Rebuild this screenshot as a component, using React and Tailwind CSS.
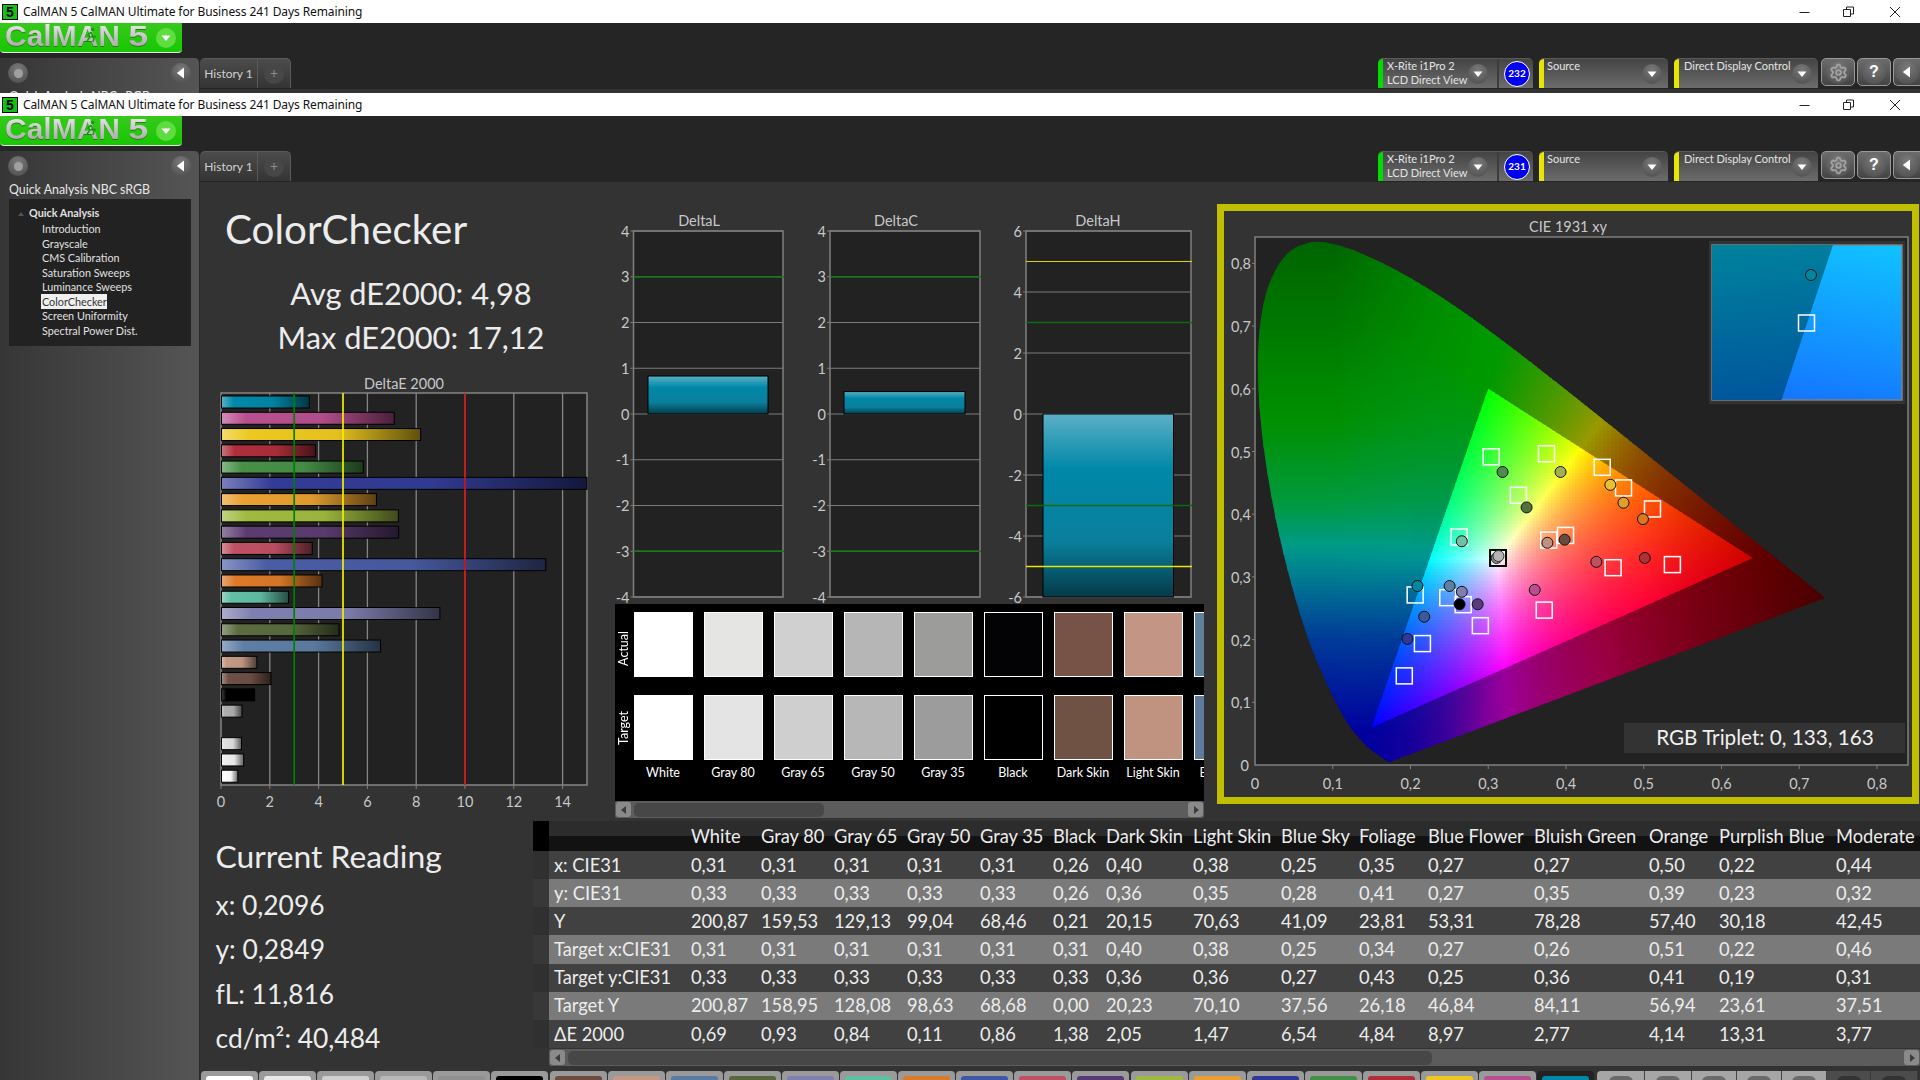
import { Settings } from 'lucide-react'

const swatches = [
  ['White', '#ffffff', '#ffffff'],
  ['Gray 80', '#e5e5e3', '#e4e4e4'],
  ['Gray 65', '#d0d0d0', '#cfcfcf'],
  ['Gray 50', '#b6b6b6', '#b7b7b7'],
  ['Gray 35', '#9c9c9a', '#9c9c9c'],
  ['Black', '#030305', '#000000'],
  ['Dark Skin', '#775347', '#705244'],
  ['Light Skin', '#c29585', '#c09380'],
  ['Blue Sky', '#5f7f9a', '#5f7a9c'],
]

const columns = ['White', 'Gray 80', 'Gray 65', 'Gray 50', 'Gray 35', 'Black', 'Dark Skin', 'Light Skin', 'Blue Sky', 'Foliage', 'Blue Flower', 'Bluish Green', 'Orange', 'Purplish Blue', 'Moderate']

const rows = [
  ['x: CIE31', '0,31 0,31 0,31 0,31 0,31 0,26 0,40 0,38 0,25 0,35 0,27 0,27 0,50 0,22 0,44'],
  ['y: CIE31', '0,33 0,33 0,33 0,33 0,33 0,26 0,36 0,35 0,28 0,41 0,27 0,35 0,39 0,23 0,32'],
  ['Y', '200,87 159,53 129,13 99,04 68,46 0,21 20,15 70,63 41,09 23,81 53,31 78,28 57,40 30,18 42,45'],
  ['Target x:CIE31', '0,31 0,31 0,31 0,31 0,31 0,31 0,40 0,38 0,25 0,34 0,27 0,26 0,51 0,22 0,46'],
  ['Target y:CIE31', '0,33 0,33 0,33 0,33 0,33 0,33 0,36 0,36 0,27 0,43 0,25 0,36 0,41 0,19 0,31'],
  ['Target Y', '200,87 158,95 128,08 98,63 68,68 0,00 20,23 70,10 37,56 26,18 46,84 84,11 56,94 23,61 37,51'],
  ['ΔE 2000', '0,69 0,93 0,84 0,11 0,86 1,38 2,05 1,47 6,54 4,84 8,97 2,77 4,14 13,31 3,77'],
]

// top to bottom as drawn in the DeltaE chart
const deltaBars = [
  [3.62, '#0088a8'], [7.1, '#b85090'], [8.18, '#eec820'], [3.87, '#ae2f3a'], [5.83, '#489048'], [15, '#323c96'],
  [6.37, '#e8a030'], [7.27, '#a0ba40'], [7.28, '#5c3c70'], [3.74, '#c05064'], [13.31, '#4a5ca4'], [4.14, '#dc7a28'],
  [2.77, '#62c0a6'], [8.97, '#8080b0'], [4.84, '#5c6c40'], [6.54, '#5e7ea4'], [1.47, '#c49a86'], [2.05, '#6e5044'],
  [1.38, '#000000'], [0.86, '#b0b0b0'], [0, '#b4b4b4'], [0.84, '#e0e0e0'], [0.93, '#f0f0f0'], [0.69, '#ffffff'],
]

const tabColors = ['#ffffff', '#e8e8e8', '#d0d0d0', '#b8b8b8', '#909090', '#000000', '#6e4c40', '#c49a86', '#5a7ca4', '#55683e', '#7f7fb0', '#60c0a4', '#dc7a28', '#4058a4', '#c05064', '#5a3a74', '#a0ba40', '#e8a030', '#30389a', '#409048', '#ae2f3a', '#eec820', '#b85090', '#0088a8']

const locusRaw = [[.1741,.005],[.1714,.0051],[.1644,.0109],[.1566,.0177],[.144,.0297],[.1241,.0578],[.1096,.0868],[.0913,.1327],[.0687,.2007],[.0454,.295],[.0235,.4127],[.0082,.5384],[.0039,.6548],[.0139,.7502],[.0389,.812],[.0743,.8338],[.1142,.8262],[.1547,.8059],[.1929,.7816],[.2296,.7543],[.2658,.7243],[.3016,.6923],[.3373,.6589],[.3731,.6245],[.4087,.5896],[.4441,.5547],[.4788,.5202],[.5125,.4866],[.5448,.4544],[.5752,.4242],[.6029,.3965],[.627,.3725],[.6658,.334],[.6915,.3083],[.7079,.292],[.719,.2809],[.726,.274],[.7334,.2666]]

// catmull-rom through the table so the horseshoe has no corners
function smooth(list) {
  const out = []
  for (let i = 0; i < list.length - 1; i++) {
    const p0 = list[Math.max(i - 1, 0)]
    const p1 = list[i]
    const p2 = list[i + 1]
    const p3 = list[Math.min(i + 2, list.length - 1)]
    for (let t = 0; t < 1; t += 0.125) {
      const f = k => 0.5 * (2 * p1[k] + (p2[k] - p0[k]) * t + (2 * p0[k] - 5 * p1[k] + 4 * p2[k] - p3[k]) * t * t + (3 * p1[k] - p0[k] - 3 * p2[k] + p3[k]) * t * t * t)
      out.push([f(0), f(1)])
    }
  }
  out.push(list[list.length - 1])
  return out
}
const locus = smooth(locusRaw)

const px = x => 1255 + x * 777.5
const py = y => 765 - y * 627
const toPoints = list => list.map(([x, y]) => `${px(x)},${py(y)}`).join(' ')

const leftStops = [[0, [0, 0, 156]], [.05, [0, 0, 160]], [.12, [0, 26, 156]], [.2, [0, 58, 152]], [.25, [0, 90, 148]], [.3, [0, 124, 144]], [.35, [0, 154, 136]], [.42, [0, 154, 60]], [.55, [0, 144, 0]], [.7, [0, 120, 0]], [.84, [0, 100, 0]]]

function leftColor(y) {
  for (let i = 0; i < leftStops.length - 1; i++) {
    const [a, ca] = leftStops[i]
    const [b, cb] = leftStops[i + 1]
    if (y <= b) return ca.map((v, k) => v + (cb[k] - v) * ((y - a) / (b - a)))
  }
  return leftStops[leftStops.length - 1][1]
}

function xyColor(x, y, inside) {
  const X = x / y
  const Z = (1 - x - y) / y
  const r = Math.max(3.2406 * X - 1.5372 - 0.4986 * Z, 0)
  const g = Math.max(-0.9689 * X + 1.8758 + 0.0415 * Z, 0)
  const b = Math.max(0.0557 * X - 0.204 + 1.057 * Z, 0)
  const m = Math.max(r, g, b) || 1
  if (inside) {
    const dim = x > 0.5 ? 1 - (x - 0.5) * 1.4 : 1
    const c = v => Math.round(255 * dim * Math.pow(v / m, 0.95))
    return `rgb(${c(r)},${c(g)},${c(b)})`
  }
  const dim = 0.6 - Math.max(0, x - 0.45) * 1.1
  const computed = [r, g, b].map(v => 255 * dim * Math.pow(v / m, 0.9))
  const left = leftColor(y)
  const w = Math.min(Math.max((x - 0.1) / 0.2, 0), 1)
  const mixed = left.map((v, k) => Math.round(v + (computed[k] - v) * w))
  return `rgb(${mixed[0]},${mixed[1]},${mixed[2]})`
}

function buildCells(x0, x1, y0, y1, step, inside) {
  const cells = []
  for (let sx = x0; sx < x1; sx += step) {
    for (let sy = y0; sy < y1; sy += step) {
      const x = (sx + step / 2 - 1255) / 777.5
      const y = (765 - sy - step / 2) / 627
      cells.push(<rect key={`${sx}-${sy}`} x={sx} y={sy} width={step + 0.5} height={step + 0.5} fill={xyColor(x, Math.max(y, 0.004), inside)} />)
    }
  }
  return cells
}

const outerCells = buildCells(1255, 1830, 238, 765, 4, false)
const innerCells = buildCells(1368, 1756, 386, 730, 3, true)

const targets = [[621,660],[743,652],[866,687],[913,740],[977,794],[681,759],[550,866],[748,874],[785,862],[890,945],[1021,937],[453,1015],[525,1022],[559,1040],[738,1054],[597,1094],[469,1140],[429,1223]]
const dots = [[646,699,'#4d8a4d'],[774,699,'#a0b050'],[884,732,'#e8c030'],[913,778,'#e0a030'],[956,820,'#d87820'],[699,790,'#50703c'],[556,877,'#70c0a8'],[745,881,'#c09080'],[783,873,'#6b4a40'],[853,930,'#c05060'],[960,920,'#b03038'],[458,992,'#0088a0'],[529,992,'#5c7fa6'],[556,1007,'#8080b0'],[551,1039,'#000000'],[591,1039,'#5a3a78'],[717,1002,'#b85090'],[473,1071,'#3a5a9a'],[436,1128,'#303898']]
const zx = v => 1210 + v / 2.208
const zy = v => 200 + v / 2.57

function mixHex(hex, target, amount) {
  const n = parseInt(hex.slice(1), 16)
  const c = [n >> 16, (n >> 8) & 255, n & 255].map(v => Math.round(v + (target - v) * amount))
  return `rgb(${c[0]},${c[1]},${c[2]})`
}

function Triangle({ dir = 'left', className }) {
  return (
    <svg viewBox="0 0 10 10" className={className}>
      {dir === 'left' ? <path d="M7.5 0.5v9L1.5 5z" fill="currentColor" /> : <path d="M0.5 2.5h9L5 8z" fill="currentColor" />}
    </svg>
  )
}

function RoundButton({ size = 'w-[20px] h-[20px]', children }) {
  return (
    <span className={`${size} rounded-full bg-[radial-gradient(circle_at_50%_30%,#7a7a7a,#4a4a4a)] flex items-center justify-center shrink-0 text-white`}>
      {children}
    </span>
  )
}

function TitleBar() {
  return (
    <div className="h-[23px] bg-white flex items-center text-[#111] shrink-0">
      <span className="ml-[2px] w-[16px] h-[16px] bg-[#12c412] border border-black flex items-center justify-center font-['Liberation_Sans',sans-serif] font-bold text-[14px] leading-none text-black">5</span>
      <span className="ml-[5px] font-['Noto_Sans',sans-serif] text-[12px] tracking-[-0.1px]">CalMAN 5 CalMAN Ultimate for Business 241 Days Remaining</span>
      <div className="ml-auto mr-[6px] flex items-center text-[#222]">
        <svg width="120" height="16" viewBox="0 0 120 16" fill="none" stroke="currentColor">
          <path d="M5.500 8.500h10" />
          <path d="M49.500 5.500h7v7h-7zM52.500 5.500v-2.500h7v7h-3" />
          <path d="M96 3l10 10M106 3l-10 10" />
        </svg>
      </div>
    </div>
  )
}

function Logo() {
  const metal = "font-['Liberation_Sans',sans-serif] font-bold text-[30px] leading-[34px] bg-[linear-gradient(#f4f4f4,#9a9a9a)] bg-clip-text text-transparent -mt-[3px]"
  return (
    <div className="h-[30px] w-[182px] shrink-0 rounded-b-[4px] bg-[linear-gradient(#38c81e,#16c800)] border-b border-[#e8e8e8] flex items-center pl-[5px] overflow-hidden relative">
      <span className={`${metal} [filter:drop-shadow(0_1px_0_#2a7a1a)]`}>CalMAN</span>
      <span className={`${metal} inline-block ml-[10px] scale-x-[1.2] [filter:drop-shadow(0_1px_0_#2a7a1a)]`}>5</span>
      <span className="absolute left-[156px] top-[5px] w-[20px] h-[20px] rounded-full bg-[#5fdc40] flex items-center justify-center text-white">
        <Triangle dir="down" className="w-[10px] h-[10px]" />
      </span>
      <svg className="absolute left-[84px] top-[4px]" width="14" height="16" viewBox="0 0 14 16">
        <circle cx="8.500" cy="2.500" r="1.800" fill="#1a9a10" />
        <path d="M7 5l-3 3 2 2-3 4M7 5l2 4 3 1M7 9l3 2-1 4" fill="none" stroke="#1a9a10" strokeWidth="1.600" />
      </svg>
    </div>
  )
}

function Device({ width, accent, pad, lines, children }) {
  return (
    <div className={`${width} h-[30px] rounded-t-[5px] bg-[linear-gradient(#444444,#6c6c6c)] border-t border-[#5a5a5a] flex overflow-hidden`}>
      <span className={`w-[5px] ${accent} rounded-tl-[4px] shrink-0`} />
      <div className={`${pad} flex-1 min-w-0 font-['Lato',sans-serif] text-[11px] leading-[14px] text-[#e4e4e4] whitespace-nowrap`}>
        {lines.map(l => <div key={l}>{l}</div>)}
      </div>
      {children}
    </div>
  )
}

function SquareButton({ className, children }) {
  return (
    <div className={`h-[28px] rounded-[5px] border border-[#999999] bg-[linear-gradient(#6c6c6c,#444444)] flex items-center justify-center ${className}`}>
      {children}
    </div>
  )
}

function Toolbar({ count }) {
  return (
    <div className="h-[31px] flex shrink-0 bg-[#252525]">
      <div className="w-[58px] h-[30px] rounded-tl-[5px] bg-[linear-gradient(#4c4c4c,#343434)] border-t border-r border-[#5a5a5a] font-['Lato',sans-serif] text-[12px] text-[#d0d0d0] flex items-center justify-center">History 1</div>
      <div className="w-[33px] h-[30px] rounded-tr-[5px] bg-[linear-gradient(#4c4c4c,#343434)] border-t border-r border-[#5a5a5a] flex items-center justify-center">
        <span className="w-[20px] h-[20px] rounded-full bg-[#474747] text-[#8a8a8a] text-[14px] leading-none flex items-center justify-center">+</span>
      </div>
      <div className="ml-auto flex items-start">
        <Device width="w-[155px]" accent="bg-[#00dc00]" pad="pl-[4px]" lines={['X-Rite i1Pro 2', 'LCD Direct View']}>
          <div className="flex items-center pr-[3px]">
            <RoundButton><Triangle dir="down" className="w-[10px] h-[10px]" /></RoundButton>
            <span className="w-[2px] h-full bg-[#3c3c3c] ml-[9px] mr-[5.500px]" />
            <span className="w-[26px] h-[26px] rounded-full bg-[#0000f0] border border-white text-white font-['Lato',sans-serif] text-[10px] font-bold flex items-center justify-center">{count}</span>
          </div>
        </Device>
        <div className="w-[6px]" />
        <Device width="w-[129px]" accent="bg-[#e6e600]" pad="pl-[3px]" lines={['Source']}>
          <div className="flex items-center pr-[6px]"><RoundButton><Triangle dir="down" className="w-[10px] h-[10px]" /></RoundButton></div>
        </Device>
        <div className="w-[6px]" />
        <Device width="w-[144px]" accent="bg-[#e6e600]" pad="pl-[5px]" lines={['Direct Display Control']}>
          <div className="flex items-center pr-[6px]"><RoundButton><Triangle dir="down" className="w-[10px] h-[10px]" /></RoundButton></div>
        </Device>
        <SquareButton className="w-[34px] ml-[3px]">
          <RoundButton size="w-[24px] h-[24px]"><Settings size={19} className="text-[#a0a0a0]" strokeWidth={2.5} /></RoundButton>
        </SquareButton>
        <SquareButton className="w-[34px] ml-[2px]">
          <RoundButton size="w-[24px] h-[24px]"><span className="font-['Liberation_Sans',sans-serif] font-bold text-[16px] leading-none">?</span></RoundButton>
        </SquareButton>
        <SquareButton className="w-[27px] ml-[2px] rounded-r-none border-r-0">
          <RoundButton size="w-[24px] h-[24px]"><Triangle className="w-[12px] h-[12px]" /></RoundButton>
        </SquareButton>
      </div>
    </div>
  )
}

function Sidebar() {
  const items = ['Introduction', 'Grayscale', 'CMS Calibration', 'Saturation Sweeps', 'Luminance Sweeps', 'ColorChecker', 'Screen Uniformity', 'Spectral Power Dist.']
  return (
    <div className="w-[200px] shrink-0 rounded-tr-[5px] bg-[linear-gradient(90deg,#363636,#555555)] border-r border-[#2a2a2a] font-['Lato',sans-serif]">
      <div className="h-[30px] flex items-center justify-between px-[8px]">
        <RoundButton>
          <span className="w-[9px] h-[9px] rounded-full bg-[#a0a0a0]" />
        </RoundButton>
        <RoundButton><Triangle className="w-[12px] h-[12px]" /></RoundButton>
      </div>
      <div className="pl-[9px] mt-[1px] text-[12.400px] leading-[16px] text-[#e8e8e8] whitespace-nowrap">Quick Analysis NBC sRGB</div>
      <div className="ml-[9px] mt-[1px] w-[182px] h-[147px] bg-[#222222] pt-[7px] text-[10.800px] text-[#e0e0e0]">
        <div className="h-[14.500px] pl-[15px] flex items-center font-bold relative">
          <span className="absolute left-[9px] top-[6px] w-0 h-0 border-l-[3px] border-r-[3px] border-b-[4px] border-l-transparent border-r-transparent border-b-[#555555]" />
          <span className="ml-[5px]">Quick Analysis</span>
        </div>
        <div className="mt-[1.500px]">
          {items.map(i => (
            <div key={i} className="h-[14.500px] pl-[33px] flex items-center">
              <span className={i === 'ColorChecker' ? 'bg-[#f0f0f0] text-[#333333] h-[15px] leading-[15px] -ml-[1px] pl-[1px] w-[66px]' : ''}>{i}</span>
            </div>
          ))}
        </div>
      </div>
    </div>
  )
}

function DeltaEChart() {
  const x = v => 221 + v * 24.4
  return (
    <svg viewBox="200 372 405 449" className="w-[405px] h-[449px] block">
      <defs>
        {deltaBars.map(([, color], i) => (
          <linearGradient key={i} id={`de${i}`}>
            <stop offset="0" stopColor={mixHex(color, 255, color === '#000000' ? 0.25 : 0.35)} />
            <stop offset="0.14" stopColor={color} />
            <stop offset="0.58" stopColor={mixHex(color, 0, 0.04)} />
            <stop offset="1" stopColor={mixHex(color, 0, 0.6)} />
          </linearGradient>
        ))}
      </defs>
      <text x="404" y="389" textAnchor="middle" className="fill-[#c8c8c8] text-[14.500px]">DeltaE 2000</text>
      <rect x="221" y="393" width="366" height="392" fill="#222222" stroke="#858585" strokeWidth="1.500" />
      {[2, 4, 6, 8, 10, 12, 14].map(v => <path key={v} d={`M${x(v)} 393V785`} stroke="#858585" strokeWidth="1.300" />)}
      {deltaBars.map(([v], i) => v > 0 && (
        <rect key={i} x="221.500" y={396 + i * 16.27} width={x(v) - 221.500} height="12" fill={`url(#de${i})`} stroke="#000000" strokeWidth="1" />
      ))}
      <path d={`M${x(3)} 393V785`} stroke="#008000" strokeWidth="1.700" />
      <path d={`M${x(5)} 393V785`} stroke="#f0f000" strokeWidth="1.700" />
      <path d={`M${x(10)} 393V785`} stroke="#d01414" strokeWidth="1.700" />
      {[0, 2, 4, 6, 8, 10, 12, 14].map(v => (
        <g key={v}>
          <path d={`M${x(v)} 785v4`} stroke="#808080" />
          <text x={x(v)} y="807" textAnchor="middle" className="fill-[#c8c8c8] text-[14.500px]">{v}</text>
        </g>
      ))}
    </svg>
  )
}

function DeltaChart({ title, titleX, x0, width, left, right, max, ticks, lines, bar }) {
  const top = 231
  const bottom = 597
  const y = v => top + ((max - v) / (2 * max)) * (bottom - top)
  const barTop = y(Math.min(bar.v, 0) === 0 ? bar.v : 0)
  const barBottom = y(Math.min(bar.v, 0))
  return (
    <svg viewBox={`${x0} 210 ${width} 393`} style={{ width, height: 393 }} className="block shrink-0">
      <text x={titleX} y="226" textAnchor="middle" className="fill-[#c8c8c8] text-[14.500px]">{title}</text>
      <rect x={left} y={top} width={right - left} height={bottom - top} fill="#222222" stroke="#808080" strokeWidth="1.500" />
      {ticks.map(v => (
        <g key={v}>
          <path d={`M${left - 3} ${y(v)}H${right}`} stroke="#7c7c7c" strokeWidth="1.200" />
          <text x={left - 4} y={y(v) + 5.500} textAnchor="end" className="fill-[#c8c8c8] text-[14.500px]">{v}</text>
        </g>
      ))}
      <rect x={bar.x0} y={barTop} width={bar.x1 - bar.x0} height={barBottom - barTop} fill="url(#deltaBar)" stroke="#000000" />
      {lines.map(([v, c, w]) => <path key={`${v}${c}`} d={`M${left} ${y(v)}H${right + 1}`} stroke={c} strokeWidth={w} />)}
    </svg>
  )
}

function CieChart() {
  return (
    <svg viewBox="1224 211 688 586" className="w-[688px] h-[586px] block">
      <defs>
        <clipPath id="locus"><polygon points={toPoints(locus)} /></clipPath>
        <clipPath id="gamut"><polygon points={toPoints([[.3, .6], [.64, .33], [.15, .06]])} /></clipPath>
        <clipPath id="dark"><polygon points="1712,245 1833,245 1781.500,400 1712,400" /></clipPath>
        <linearGradient id="insetLight" x1="0.8" y1="0" x2="0.6" y2="1">
          <stop offset="0" stopColor="#10c0ff" />
          <stop offset="1" stopColor="#1478ff" />
        </linearGradient>
        <linearGradient id="insetDark" x1="0.4" y1="0" x2="0.5" y2="1">
          <stop offset="0" stopColor="#00809c" />
          <stop offset="1" stopColor="#00559c" />
        </linearGradient>
      </defs>
      <text x="1568" y="232" textAnchor="middle" className="fill-[#c8c8c8] text-[14.500px]">CIE 1931 xy</text>
      <rect x="1255" y="237" width="653" height="528" fill="#222222" stroke="#808080" strokeWidth="1.500" />
      <g clipPath="url(#locus)" shapeRendering="crispEdges">{outerCells}</g>
      <g clipPath="url(#gamut)" shapeRendering="crispEdges">{innerCells}</g>
      {[1, 2, 3, 4, 5, 6, 7, 8].map(v => (
        <g key={v}>
          <path d={`M1252 ${py(v / 10)}h3`} stroke="#808080" />
          <text x="1251" y={py(v / 10) + 6} textAnchor="end" className="fill-[#c8c8c8] text-[14.500px]">{`0,${v}`}</text>
          <path d={`M${px(v / 10)} 765v4`} stroke="#808080" />
          <text x={px(v / 10)} y="789" textAnchor="middle" className="fill-[#c8c8c8] text-[14.500px]">{`0,${v}`}</text>
        </g>
      ))}
      <text x="1249" y="771" textAnchor="end" className="fill-[#c8c8c8] text-[14.500px]">0</text>
      <text x="1255" y="789" textAnchor="middle" className="fill-[#c8c8c8] text-[14.500px]">0</text>

      <rect x={zx(636) - 8} y={zy(920) - 8} width="16" height="16" fill="none" stroke="#000000" strokeWidth="2" />
      <circle cx={zx(633)} cy={zy(920)} r="5.500" fill="#888888" stroke="#222222" />
      <circle cx={zx(637)} cy={zy(915)} r="5.500" fill="#b4b4b4" stroke="#333333" />
      {targets.map(([x, y]) => <rect key={`${x}${y}`} x={zx(x) - 8} y={zy(y) - 8} width="16" height="16" fill="none" stroke="#ffffff" strokeWidth="1.500" />)}
      {dots.map(([x, y, c]) => <circle key={`${x}${y}`} cx={zx(x)} cy={zy(y)} r="5.500" fill={c} stroke="#111111" />)}

      <rect x="1709" y="241" width="196" height="163" fill="#333333" />
      <rect x="1712" y="245" width="190" height="155" fill="url(#insetLight)" stroke="#808080" strokeWidth="1.500" />
      <g clipPath="url(#dark)"><rect x="1712" y="245" width="190" height="155" fill="url(#insetDark)" /></g>
      <circle cx="1811" cy="275" r="5.500" fill="#0088a0" stroke="#111111" />
      <rect x="1798.500" y="315" width="16" height="16" fill="none" stroke="#ffffff" strokeWidth="1.500" />

      <rect x="1624" y="723" width="281" height="30" fill="#333333" />
      <text x="1765" y="745" textAnchor="middle" className="fill-[#f0f0f0] text-[20.700px]">RGB Triplet: 0, 133, 163</text>
    </svg>
  )
}

function ScrollArrow({ dir, className }) {
  return (
    <span className={`w-[15px] h-[15px] rounded-[3px] bg-[#8a8a8a] text-[#3c3c3c] flex items-center justify-center shrink-0 ${className}`}>
      <svg viewBox="0 0 10 10" className="w-[10px] h-[10px]"><path d={dir === 'left' ? 'M7 1v8L2 5z' : 'M3 1v8l5-4z'} fill="currentColor" /></svg>
    </span>
  )
}

function SwatchPanel() {
  return (
    <div className="ml-[10px] w-[589px] h-[197px] bg-black flex overflow-hidden font-['Lato',sans-serif] text-white shrink-0">
      <div className="w-[18.500px] shrink-0 flex flex-col text-[12.500px]">
        <div className="h-[81px] pt-[8px] flex items-center justify-center"><span className="[writing-mode:vertical-rl] rotate-180">Actual</span></div>
        <div className="h-[83px] pt-[3px] flex items-center justify-center"><span className="[writing-mode:vertical-rl] rotate-180">Target</span></div>
      </div>
      <div className="flex gap-[11px]">
        {swatches.map(([name, actual, target]) => (
          <div key={name} className="w-[59px] shrink-0 pt-[8px] flex flex-col items-center">
            <div className="w-full h-[65px] border border-white" style={{ background: actual }} />
            <div className="w-full h-[65px] mt-[18px] border border-white" style={{ background: target }} />
            <div className="mt-[5px] text-[12.500px] leading-[16px] whitespace-nowrap">{name}</div>
          </div>
        ))}
      </div>
    </div>
  )
}

function Scrollbar({ className, thumb }) {
  return (
    <div className={`flex items-center bg-[#5c5c5c] px-[1px] rounded-[2px] ${className}`}>
      <ScrollArrow dir="left" />
      <div className={`h-[14px] rounded-[5px] bg-[#474747] ml-[3px] ${thumb}`} />
      <ScrollArrow dir="right" className="ml-auto" />
    </div>
  )
}

function DataTable() {
  const headCell = 'flex items-center whitespace-nowrap pt-[1px]'
  return (
    <div className="w-[1387px] h-[227px] grid grid-cols-[16px_142px_70px_73px_73px_73px_73px_53px_87px_88px_78px_69px_106px_115px_70px_117px_84px] auto-rows-[28.140px] [grid-template-rows:30px] overflow-hidden font-['Lato',sans-serif] text-[18.300px] text-[#ececec]">
      <div className="bg-black" />
      <div className="bg-[linear-gradient(#2c2c2c_50%,#121212_50%)]" />
      {columns.map(c => <div key={c} className={`${headCell} bg-[linear-gradient(#2c2c2c_50%,#121212_50%)]`}>{c}</div>)}
      {rows.map(([label, values], r) => {
        const tone = r % 2 === 0 ? 'bg-[#414141]' : 'bg-[#7a7a7a]'
        return [
          <div key={`${label}-s`} className={r % 2 === 0 ? 'bg-[#303030]' : 'bg-[#383838]'} />,
          <div key={label} className={`${headCell} ${tone} pl-[5px]`}>{label}</div>,
          ...values.split(' ').map((v, i) => <div key={`${label}${i}`} className={`${headCell} ${tone}`}>{v}</div>),
        ]
      })}
    </div>
  )
}

function TabStrip() {
  return (
    <div className="h-[9px] flex overflow-hidden shrink-0 pl-[1px]">
      <div className="flex gap-[1.100px]">
        {tabColors.map((c, i) => (
          <div key={i} className={`w-[57px] h-[9px] rounded-t-[4px] pt-[5px] px-[5px] ${i === 23 ? 'bg-[#222222]' : 'bg-[#9a9a9a]'}`}>
            <div className="h-[4px] rounded-t-[3px]" style={{ background: c }} />
          </div>
        ))}
      </div>
      <div className="flex ml-[3px]">
        {[48, 47, 45, 45, 45].map((w, i) => (
          <div key={i} style={{ width: w }} className="h-[9px] bg-[#a6a6a6] border-r border-[#444444] flex justify-center pt-[5px] first:rounded-tl-[4px]">
            <span className="w-[24px] h-[12px] rounded-full bg-[#6a6a6a]" />
          </div>
        ))}
        {[44, 47].map((w, i) => (
          <div key={i} style={{ width: w }} className="h-[9px] bg-[#4c4c4c] border-r border-[#3a3a3a] flex justify-center pt-[5px]">
            <span className="w-[24px] h-[12px] rounded-full bg-[#333333]" />
          </div>
        ))}
      </div>
    </div>
  )
}

function Report() {
  return (
    <div className="h-[898px] flex flex-col font-['Lato',sans-serif]">
      <div className="h-[639px] flex shrink-0">
        <div className="w-[405px] shrink-0 flex flex-col">
          <div className="h-[190px] text-[#ececec]">
            <div className="pl-[25px] pt-[21px] text-[40.400px] leading-[52px] whitespace-nowrap">ColorChecker</div>
            <div className="mt-[17px] w-[422px] text-center text-[30.800px] leading-[44px]">Avg dE2000: 4,98</div>
            <div className="w-[422px] text-center text-[30.800px] leading-[44px]">Max dE2000: 17,12</div>
          </div>
          <DeltaEChart />
        </div>
        <div className="w-[612px] shrink-0 pt-[28px]">
          <svg width="0" height="0" className="absolute">
            <defs>
              <linearGradient id="deltaBar" x1="0" y1="0" x2="0" y2="1">
                <stop offset="0" stopColor="#5cb0c6" />
                <stop offset="0.3" stopColor="#0088a8" />
                <stop offset="0.7" stopColor="#0a7f9c" />
                <stop offset="1" stopColor="#043a48" />
              </linearGradient>
            </defs>
          </svg>
          <div className="flex">
            <DeltaChart title="DeltaL" titleX={699} x0={605} width={195} left={633.5} right={783} max={4} ticks={[4, 3, 2, 1, 0, -1, -2, -3, -4]} lines={[[3, '#167a16', 1.6], [-3, '#167a16', 1.6]]} bar={{ v: 0.83, x0: 648, x1: 768 }} />
            <DeltaChart title="DeltaC" titleX={896} x0={800} width={200} left={830} right={980} max={4} ticks={[4, 3, 2, 1, 0, -1, -2, -3, -4]} lines={[[3, '#167a16', 1.6], [-3, '#167a16', 1.6]]} bar={{ v: 0.49, x0: 844, x1: 965 }} />
            <DeltaChart title="DeltaH" titleX={1098} x0={1000} width={210} left={1026} right={1191} max={6} ticks={[6, 4, 2, 0, -2, -4, -6]} lines={[[5, '#d8d800', 1.2], [3, '#0f6a0f', 1.6], [-3, '#0f6a0f', 1.6], [-5, '#e8e800', 1.6]]} bar={{ v: -6, x0: 1043, x1: 1173.500 }} />
          </div>
          <div className="h-[1px]" />
          <SwatchPanel />
          <Scrollbar className="ml-[10px] w-[589px] h-[17px]" thumb="w-[190px]" />
        </div>
        <div className="w-[702px] h-[600px] mt-[22px] border-[7px] border-[#bfbf00] bg-[#333333] shrink-0">
          <CieChart />
        </div>
      </div>
      <div className="h-[250px] flex shrink-0">
        <div className="w-[333px] pl-[15.500px] pt-[14px] text-[#ececec] shrink-0">
          <div className="text-[31.800px] leading-[42px] whitespace-nowrap">Current Reading</div>
          <div className="mt-[6px] text-[26.400px] leading-[44.300px]">
            <div>x: 0,2096</div>
            <div>y: 0,2849</div>
            <div>fL: 11,816</div>
            <div>cd/m²: 40,484</div>
          </div>
        </div>
        <div>
          <DataTable />
          <Scrollbar className="ml-[16px] w-[1371px] h-[17px] mt-[1px]" thumb="w-[864px]" />
        </div>
      </div>
      <TabStrip />
    </div>
  )
}

function AppWindow({ count, height, children }) {
  return (
    <div className={`${height} overflow-hidden flex flex-col bg-[#252525]`}>
      <TitleBar />
      <Logo />
      <div className="flex flex-1 mt-[5px]">
        <Sidebar />
        <div className="flex-1 flex flex-col min-w-0">
          <Toolbar count={count} />
          <div className="flex-1 bg-[#333333]">{children}</div>
        </div>
      </div>
    </div>
  )
}

export default function App() {
  return (
    <div className="w-[1920px] h-[1080px] overflow-hidden">
      <AppWindow count="232" height="h-[93px]" />
      <AppWindow count="231" height="h-[987px]">
        <Report />
      </AppWindow>
    </div>
  )
}
